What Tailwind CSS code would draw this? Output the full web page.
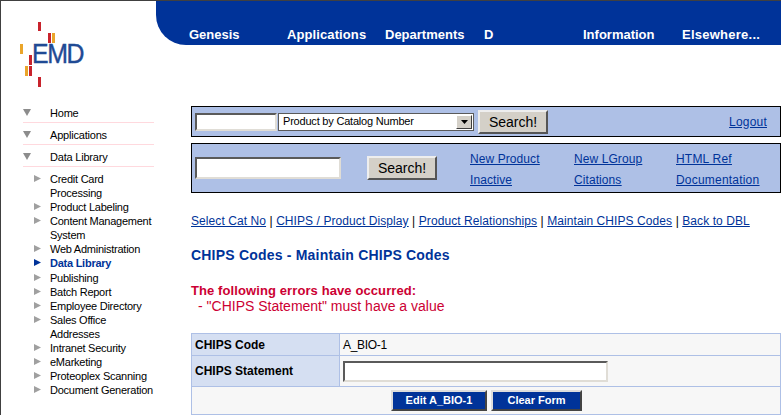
<!DOCTYPE html>
<html lang="en">
<head>
  <meta charset="UTF-8">
  <title>CHIPS Codes - Maintain CHIPS Codes</title>
  <script src="https://cdn.jsdelivr.net/npm/@tailwindcss/browser@4"></script>
</head>
<body class="bg-white overflow-hidden font-['Liberation_Sans',Arial,sans-serif]">
<div class="w-[781px] h-[415px] overflow-hidden border-t border-l border-[#404040] flex text-[11px] text-black">

  <!-- sidebar -->
  <div class="w-[155px] shrink-0">
    <div class="relative h-[100px]">
      <svg class="absolute left-0 top-0" width="100" height="100" viewBox="0 0 100 100">
        <rect x="37" y="21" width="3" height="9" fill="#c8232c"/>
        <rect x="47" y="32" width="3" height="10" fill="#c8232c"/>
        <rect x="51" y="32" width="3" height="10" fill="#eaa52a"/>
        <rect x="19" y="43" width="3" height="10" fill="#eaa52a"/>
        <rect x="28" y="54" width="3" height="10" fill="#c8232c"/>
        <rect x="24" y="65" width="3" height="10" fill="#eaa52a"/>
        <rect x="28" y="65" width="3" height="10" fill="#c8232c"/>
        <rect x="37" y="76" width="3" height="10" fill="#c8232c"/>
      </svg>
      <span class="absolute left-[31px] top-[38px] origin-left scale-x-[0.92] text-[27px] leading-[30px] tracking-[-1.5px] font-medium [-webkit-text-stroke:0.4px_#1f4a94] text-[#1f4a94]">EMD</span>
    </div>

    <ul class="ml-[22px] w-[131px] tracking-[-0.2px]">
      <li class="h-[22px] border-b border-[#ffd9de] flex"><svg class="mt-[8px]" width="8" height="7" viewBox="0 0 8 7"><path d="M0 0H8L4 7Z" fill="#8c8c8c"/></svg><span class="ml-[19px] mt-[5px] leading-[14px]">Home</span></li>
      <li class="h-[22px] border-b border-[#ffd9de] flex"><svg class="mt-[8px]" width="8" height="7" viewBox="0 0 8 7"><path d="M0 0H8L4 7Z" fill="#8c8c8c"/></svg><span class="ml-[19px] mt-[5px] leading-[14px]">Applications</span></li>
      <li class="h-[22px] border-b border-[#ffd9de] flex"><svg class="mt-[8px]" width="8" height="7" viewBox="0 0 8 7"><path d="M0 0H8L4 7Z" fill="#8c8c8c"/></svg><span class="ml-[19px] mt-[5px] leading-[14px]">Data Library</span></li>
    </ul>

    <ul class="ml-[33px] mt-[5px] w-[125px] leading-[14px] tracking-[-0.25px]">
      <li class="flex"><svg class="mt-[3px] shrink-0" width="7" height="7" viewBox="0 0 7 7"><path d="M0 0V7L7 3.5Z" fill="#a0a0a0"/></svg><span class="ml-[9px] w-[90px]">Credit Card Processing</span></li>
      <li class="flex"><svg class="mt-[3px] shrink-0" width="7" height="7" viewBox="0 0 7 7"><path d="M0 0V7L7 3.5Z" fill="#a0a0a0"/></svg><span class="ml-[9px]">Product Labeling</span></li>
      <li class="flex"><svg class="mt-[3px] shrink-0" width="7" height="7" viewBox="0 0 7 7"><path d="M0 0V7L7 3.5Z" fill="#a0a0a0"/></svg><span class="ml-[9px]">Content Management System</span></li>
      <li class="flex"><svg class="mt-[3px] shrink-0" width="7" height="7" viewBox="0 0 7 7"><path d="M0 0V7L7 3.5Z" fill="#a0a0a0"/></svg><span class="ml-[9px]">Web Administration</span></li>
      <li class="flex h-[15px] font-bold text-[#003399]"><svg class="mt-[3px] shrink-0" width="7" height="7" viewBox="0 0 7 7"><path d="M0 0V7L7 3.5Z" fill="#003399"/></svg><span class="ml-[9px]">Data Library</span></li>
      <li class="flex"><svg class="mt-[3px] shrink-0" width="7" height="7" viewBox="0 0 7 7"><path d="M0 0V7L7 3.5Z" fill="#a0a0a0"/></svg><span class="ml-[9px]">Publishing</span></li>
      <li class="flex"><svg class="mt-[3px] shrink-0" width="7" height="7" viewBox="0 0 7 7"><path d="M0 0V7L7 3.5Z" fill="#a0a0a0"/></svg><span class="ml-[9px]">Batch Report</span></li>
      <li class="flex"><svg class="mt-[3px] shrink-0" width="7" height="7" viewBox="0 0 7 7"><path d="M0 0V7L7 3.5Z" fill="#a0a0a0"/></svg><span class="ml-[9px]">Employee Directory</span></li>
      <li class="flex"><svg class="mt-[3px] shrink-0" width="7" height="7" viewBox="0 0 7 7"><path d="M0 0V7L7 3.5Z" fill="#a0a0a0"/></svg><span class="ml-[9px] w-[90px]">Sales Office Addresses</span></li>
      <li class="flex"><svg class="mt-[3px] shrink-0" width="7" height="7" viewBox="0 0 7 7"><path d="M0 0V7L7 3.5Z" fill="#a0a0a0"/></svg><span class="ml-[9px]">Intranet Security</span></li>
      <li class="flex"><svg class="mt-[3px] shrink-0" width="7" height="7" viewBox="0 0 7 7"><path d="M0 0V7L7 3.5Z" fill="#a0a0a0"/></svg><span class="ml-[9px]">eMarketing</span></li>
      <li class="flex"><svg class="mt-[3px] shrink-0" width="7" height="7" viewBox="0 0 7 7"><path d="M0 0V7L7 3.5Z" fill="#a0a0a0"/></svg><span class="ml-[9px]">Proteoplex Scanning</span></li>
      <li class="flex"><svg class="mt-[3px] shrink-0" width="7" height="7" viewBox="0 0 7 7"><path d="M0 0V7L7 3.5Z" fill="#a0a0a0"/></svg><span class="ml-[9px] whitespace-nowrap">Document Generation</span></li>
    </ul>
  </div>

  <!-- right column -->
  <div class="flex-1 min-w-0">
    <div class="h-[44px] bg-[#003399] rounded-bl-[30px] relative text-white font-bold text-[13px] leading-[15px]">
      <span class="absolute left-[33px] top-[26px]">Genesis</span>
      <span class="absolute left-[131px] top-[26px] tracking-[0.1px]">Applications</span>
      <span class="absolute left-[229px] top-[26px]">Departments</span>
      <span class="absolute left-[328px] top-[26px]">D</span>
      <span class="absolute left-[427px] top-[26px]">Information</span>
      <span class="absolute left-[526px] top-[26px] tracking-[0.25px]">Elsewhere...</span>
    </div>

    <div class="ml-[35px] mt-[61px] text-[12px]">
      <div class="h-[31px] bg-[#aec0e6] border border-black flex items-center pl-[3px] pr-[13px]">
        <div class="w-[82px] h-[18px] bg-white border-2 border-t-[#5a5a5a] border-l-[#5a5a5a] border-r-[#e0ddd6] border-b-[#e0ddd6]"></div>
        <div class="w-[196px] h-[18px] ml-[1px] bg-white border border-[#5a5a5a] flex items-center justify-between pl-[4px] pr-[1px] text-[11px] tracking-[-0.2px]">
          <span>Product by Catalog Number</span>
          <span class="w-[16px] h-[14px] bg-[#d4d0c8] border border-t-white border-l-white border-r-[#404040] border-b-[#404040] flex items-center justify-center"><svg width="7" height="4" viewBox="0 0 7 4"><path d="M0 0H7L3.5 4Z" fill="#000"/></svg></span>
        </div>
        <button class="ml-[4px] w-[70px] h-[24px] bg-[#d4d0c8] border-2 border-t-[#eeeeee] border-l-[#eeeeee] border-r-[#555555] border-b-[#555555] text-[14px] leading-none">Search!</button>
        <a class="ml-auto underline text-[#003399] tracking-[0.2px]" href="#">Logout</a>
      </div>

      <div class="h-[50px] mt-[6px] bg-[#aec0e6] border border-black flex items-center pl-[3px]">
        <div class="w-[146px] h-[22px] bg-white border-2 border-t-[#5a5a5a] border-l-[#5a5a5a] border-r-[#e0ddd6] border-b-[#e0ddd6]"></div>
        <button class="ml-[26px] w-[70px] h-[24px] bg-[#d4d0c8] border-2 border-t-[#eeeeee] border-l-[#eeeeee] border-r-[#555555] border-b-[#555555] text-[14px] leading-none">Search!</button>
        <div class="ml-[33px] w-[104px] flex flex-col gap-[7px] pt-[2px] leading-[14px] text-[#003399] underline tracking-[0.08px]"><a href="#">New Product</a><a href="#">Inactive</a></div>
        <div class="w-[102px] flex flex-col gap-[7px] pt-[2px] leading-[14px] text-[#003399] underline tracking-[0.08px]"><a href="#">New LGroup</a><a href="#">Citations</a></div>
        <div class="flex flex-col gap-[7px] pt-[2px] leading-[14px] text-[#003399] underline tracking-[0.2px]"><a href="#">HTML Ref</a><a href="#">Documentation</a></div>
      </div>

      <p class="mt-[21px] leading-[15px] whitespace-nowrap text-[#003399] tracking-[0.08px]"><a class="underline" href="#">Select Cat No</a> <span class="text-black">|</span> <a class="underline" href="#">CHIPS / Product Display</a> <span class="text-black">|</span> <a class="underline" href="#">Product Relationships</a> <span class="text-black">|</span> <a class="underline" href="#">Maintain CHIPS Codes</a> <span class="text-black">|</span> <a class="underline" href="#">Back to DBL</a></p>

      <h1 class="mt-[19px] font-bold text-[14px] leading-[15px] text-[#003399] tracking-[0.2px]">CHIPS Codes - Maintain CHIPS Codes</h1>

      <div class="mt-[20px] text-[#cc0033]">
        <p class="font-bold text-[13px] tracking-[0.1px] leading-[15px]">The following errors have occurred:</p>
        <p class="text-[14px] leading-[16px] pl-[7px]">- "CHIPS Statement" must have a value</p>
      </div>

      <table class="mt-[19px] w-[590px] border-collapse table-fixed">
        <tbody>
          <tr class="h-[22px]">
            <td class="w-[148px] bg-[#d5dff2] border border-[#aec0e6] pl-[3px] font-bold text-black">CHIPS Code</td>
            <td class="bg-[#f7f7f7] border border-[#aec0e6] pl-[3px] tracking-[-0.3px]">A_BIO-1</td>
          </tr>
          <tr class="h-[31px]">
            <td class="bg-[#d5dff2] border border-[#aec0e6] pl-[3px] font-bold text-black">CHIPS Statement</td>
            <td class="bg-[#f7f7f7] border border-[#aec0e6] pl-[3px]"><div class="w-[265px] h-[21px] bg-white border-2 border-t-[#5a5a5a] border-l-[#5a5a5a] border-r-[#e0ddd6] border-b-[#e0ddd6]"></div></td>
          </tr>
          <tr class="h-[28px]">
            <td colspan="2" class="bg-[#f7f7f7] border border-[#aec0e6] pl-[199px]">
              <div class="flex gap-[4px]">
                <button class="w-[96px] h-[21px] bg-[#003399] border-2 border-t-[#dddddd] border-l-[#dddddd] border-r-[#444444] border-b-[#444444] text-white font-bold text-[11px] leading-none">Edit A_BIO-1</button>
                <button class="w-[91px] h-[21px] bg-[#003399] border-2 border-t-[#dddddd] border-l-[#dddddd] border-r-[#444444] border-b-[#444444] text-white font-bold text-[11px] leading-none">Clear Form</button>
              </div>
            </td>
          </tr>
        </tbody>
      </table>
    </div>
  </div>
</div>
</body>
</html>
